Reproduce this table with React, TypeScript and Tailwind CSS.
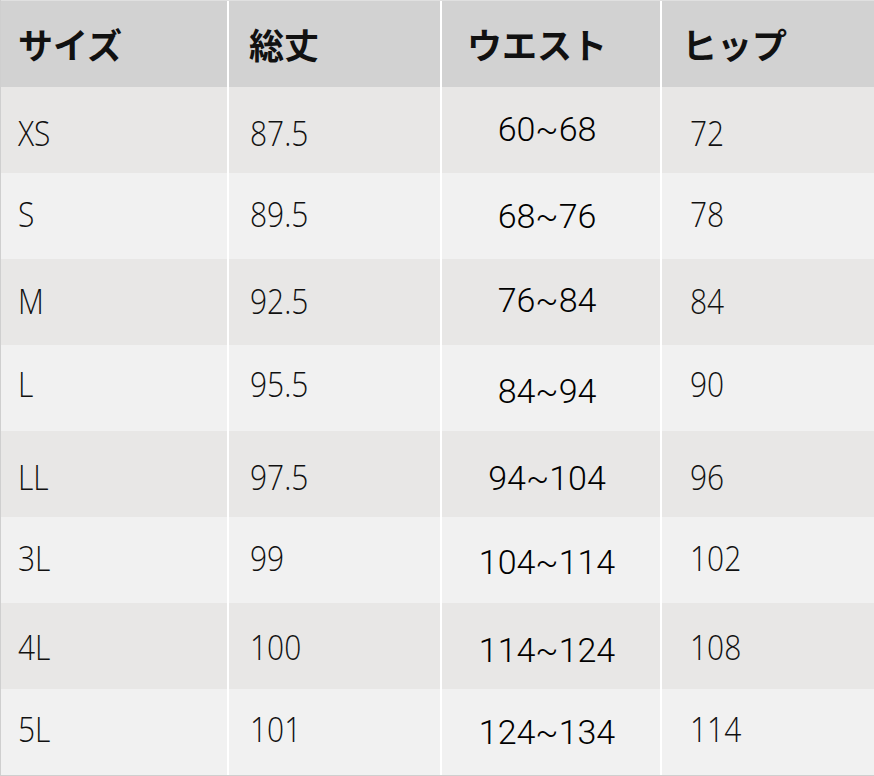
const rows = [
  { size: 'XS', length: '87.5', waist: '60~68', hip: '72', shift: 'pt-[7px]', wshift: 'pb-[2px]' },
  { size: 'S', length: '89.5', waist: '68~76', hip: '78', shift: 'pb-[4px]', wshift: 'pt-[0px]' },
  { size: 'M', length: '92.5', waist: '76~84', hip: '84', shift: 'pb-[2px]', wshift: 'pb-[3px]' },
  { size: 'L', length: '95.5', waist: '84~94', hip: '90', shift: 'pb-[8px]', wshift: 'pt-[7px]' },
  { size: 'LL', length: '97.5', waist: '94~104', hip: '96', shift: 'pt-[7px]', wshift: 'pt-[8px]' },
  { size: '3L', length: '99', waist: '104~114', hip: '102', shift: 'pb-[3px]', wshift: 'pt-[4px]' },
  { size: '4L', length: '100', waist: '114~124', hip: '108', shift: 'pt-[2px]', wshift: 'pt-[8px]' },
  { size: '5L', length: '101', waist: '124~134', hip: '114', shift: 'pb-[5px]', wshift: 'pt-[1px]' },
];

const cols = 'grid grid-cols-[226px_211px_218px_1fr] gap-x-[2px] bg-white';
const body = 'flex items-center text-[34px] font-light text-[#111]';
const font = { fontFamily: '"Open Sans", sans-serif' };

// narrower figures, like the Segoe-style face in the source
const Num = ({ children }: { children: React.ReactNode }) => (
  <span className="inline-block origin-left scale-x-[0.88]">{children}</span>
);

const App = () => {
  return (
    <div className="w-[874px] h-[776px] border-l border-b border-[#cfcfcf] bg-white overflow-hidden">
      {/* header */}
      <div
        className={`${cols} h-[87px] border-t border-[#e0e0e0] text-[35px] font-bold text-[#111]`}
        style={{ fontFamily: '"Noto Sans CJK JP", sans-serif' }}
      >
        <div className="bg-[#d2d2d2] flex items-center pl-[17px]">サイズ</div>
        <div className="bg-[#d2d2d2] flex items-center pl-[20px]">総丈</div>
        <div className="bg-[#d2d2d2] flex items-center pl-[25px]">ウエスト</div>
        <div className="bg-[#d2d2d2] flex items-center pl-[20px]">ヒップ</div>
      </div>

      {rows.map((r, i) => {
        const bg = i % 2 === 0 ? 'bg-[#e8e7e6]' : 'bg-[#f1f1f1]';
        return (
          <div key={r.size} className={`${cols} h-[86px]`}>
            <div className={`${bg} ${body} ${r.shift} pl-[17px]`} style={font}>
              <Num>{r.size}</Num>
            </div>
            <div className={`${bg} ${body} ${r.shift} pl-[21px]`} style={font}>
              <Num>{r.length}</Num>
            </div>
            <div
              className={`${bg} ${r.wshift} flex items-center justify-center pr-[8px] text-[34px] font-[350] text-black`}
              style={{ fontFamily: 'Roboto, sans-serif' }}
            >
              {r.waist}
            </div>
            <div className={`${bg} ${body} ${r.shift} pl-[28px]`} style={font}>
              <Num>{r.hip}</Num>
            </div>
          </div>
        );
      })}
    </div>
  );
};

export default App;
